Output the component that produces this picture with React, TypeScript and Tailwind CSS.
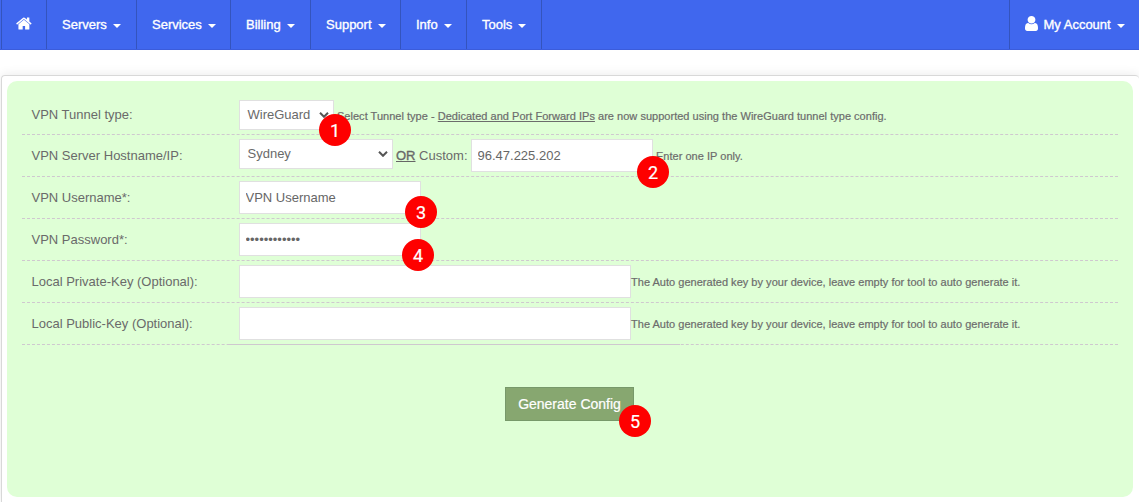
import type { ReactNode } from 'react';

const navItems = [
  { label: 'Servers', width: 'w-[90px]', text: 'w-[45px]' },
  { label: 'Services', width: 'w-[94px]', text: 'w-[50px]' },
  { label: 'Billing', width: 'w-[80px]', text: 'w-[35px]' },
  { label: 'Support', width: 'w-[90px]', text: 'w-[46px]' },
  { label: 'Info', width: 'w-[66px]', text: 'w-[22px]' },
  { label: 'Tools', width: 'w-[75px]', text: 'w-[30px]' },
];

function HomeIcon() {
  return (
    <svg viewBox="0 0 1792 1792" className="size-[17px] fill-current">
      <path d="M1408 992v480q0 26-19 45t-45 19h-384v-384h-256v384h-384q-26 0-45-19t-19-45v-480q0-1 .5-3t.5-3l575-474 575 474q1 2 1 6zm223-69l-62 74q-8 9-21 11h-3q-13 0-21-7l-692-577-692 577q-12 8-24 7-13-2-21-11l-62-74q-8-10-7-23.5t11-21.5l719-599q32-26 76-26t76 26l244 204v-195q0-14 9-23t23-9h192q14 0 23 9t9 23v408l219 182q10 8 11 21.5t-7 23.5z" />
    </svg>
  );
}

function UserIcon() {
  return (
    <svg viewBox="256 128 1280 1536" preserveAspectRatio="none" className="h-[15px] w-[13px] fill-current">
      <path d="M1536 1399q0 109-62.5 187t-150.5 78h-854q-88 0-150.5-78t-62.5-187q0-85 8.5-160.5t31.5-152 58.5-131 94-89 134.5-34.5q131 128 313 128t313-128q76 0 134.5 34.5t94 89 58.5 131 31.5 152 8.5 160.5zm-256-887q0 159-112.5 271.5t-271.5 112.5-271.5-112.5-112.5-271.5 112.5-271.5 271.5-112.5 271.5 112.5 112.5 271.5z" />
    </svg>
  );
}

function Caret() {
  return <span className="mt-[3px] border-x-4 border-t-4 border-x-transparent border-t-white" />;
}

function Badge({ n, place }: { n: number; place: string }) {
  return (
    <span className={`absolute z-10 flex size-8 items-center justify-center rounded-full bg-[#fe0000] text-[18px] text-white [-webkit-text-stroke:0.2px_white] font-['Roboto',sans-serif] ${place}`}>
      {n}
    </span>
  );
}

function Row({ label, first, last, children }: { label: string; first?: boolean; last?: boolean; children: ReactNode }) {
  return (
    <div className={`flex border-b border-dashed border-[#cfc8cf] ${first ? 'h-[39px]' : 'h-[42px]'}`}>
      <div className={`w-[217px] shrink-0 pl-[9.5px] leading-[18px] ${first ? 'pt-[10px]' : 'pt-[12px]'}`}>{label}</div>
      <div className="relative flex grow items-start pt-1">
        {children}
        {last && <span className="absolute -bottom-px -left-[11px] w-[452px] border-b border-[#cfc8cf]" />}
      </div>
    </div>
  );
}

function Select({ value, width }: { value: string; width: string }) {
  return (
    <div className={`flex h-[30px] shrink-0 items-center justify-between border border-[#e0e0e0] bg-white pr-1 pl-[7.5px] ${width}`}>
      {value}
      <svg viewBox="0 0 10 6" className="h-[6px] w-[10px] fill-none stroke-[#555] stroke-2">
        <path d="M1 .8 5 4.8 9 .8" />
      </svg>
    </div>
  );
}

function Field({ value, width, type = 'text' }: { value?: string; width: string; type?: string }) {
  return (
    <input
      type={type}
      defaultValue={value}
      className={`h-[33px] shrink-0 border border-[#e0e0e0] bg-white px-[5.5px] text-[#666] outline-none ${width}`}
    />
  );
}

const hint = 'whitespace-nowrap text-[11px] leading-[14px] tracking-[0.022px] text-[#6c6c6c] [-webkit-text-stroke:0.2px_#6c6c6c]';

export default function App() {
  return (
    <div className="flex h-[502px] w-[1139px] flex-col overflow-hidden bg-white font-['Liberation_Sans',Arial,sans-serif] text-[13px] text-[#6a6a6a]">
      <nav className="flex h-[50px] shrink-0 border-b border-[#3b5cdb] bg-[#4067ee] pl-px text-white [-webkit-text-stroke:0.35px_white]">
        <a className="flex w-[46px] items-center justify-center border-x border-[#3454bd] pb-0.5">
          <HomeIcon />
        </a>
        {navItems.map((item) => (
          <a key={item.label} className={`flex items-center border-r border-[#3454bd] pl-[15px] ${item.width}`}>
            <span className={`mr-[6px] whitespace-nowrap ${item.text}`}>{item.label}</span>
            <Caret />
          </a>
        ))}
        <a className="ml-auto flex w-[130px] items-center border-l border-[#3454bd] pl-[15px]">
          <span className="mr-[5.5px] pb-[2px]"><UserIcon /></span>
          <span className="mr-[5.5px] w-[68px] whitespace-nowrap">My Account</span>
          <Caret />
        </a>
      </nav>

      <main className="mt-[25px] ml-px grow rounded-t-[4px] border-t border-l border-[#d8d8d8] px-[5px] pt-[5px] shadow-[0_0_12px_rgba(0,0,0,0.09)]">
        <div className="h-[416px] w-[1126px] rounded-[10px] bg-[#dfffd6] pt-[15px] pr-[15px] pl-[15px]">
          <Row label="VPN Tunnel type:" first>
            <Select value="WireGuard" width="w-[95px]" />
            <p className={`mt-[9px] ml-[3px] ${hint}`}>
              Select Tunnel type - <span className="underline underline-offset-1">Dedicated and Port Forward IPs</span> are now supported using the WireGuard tunnel type config.
            </p>
            <Badge n={1} place="left-[80px] top-[18px]" />
          </Row>
          <Row label="VPN Server Hostname/IP:">
            <Select value="Sydney" width="w-[154px]" />
            <span className="mt-2 ml-[3px] w-[75px] shrink-0 whitespace-nowrap leading-[18px]">
              <span className="underline underline-offset-1 [-webkit-text-stroke:0.35px_#666]">OR</span> Custom:
            </span>
            <Field value="96.47.225.202" width="w-[182px]" />
            <p className={`mt-[10px] ml-[3px] ${hint}`}>Enter one IP only.</p>
            <Badge n={2} place="left-[398px] top-[21px]" />
          </Row>
          <Row label="VPN Username*:">
            <Field value="VPN Username" width="w-[182px]" />
            <Badge n={3} place="left-[166px] top-[19px]" />
          </Row>
          <Row label="VPN Password*:">
            <Field value="passwordpass" type="password" width="w-[182px]" />
            <Badge n={4} place="left-[163px] top-[20px]" />
          </Row>
          <Row label="Local Private-Key (Optional):">
            <Field width="w-[392px]" />
            <p className={`mt-[10px] ${hint}`}>The Auto generated key by your device, leave empty for tool to auto generate it.</p>
          </Row>
          <Row label="Local Public-Key (Optional):" last>
            <Field width="w-[392px]" />
            <p className={`mt-[10px] ${hint}`}>The Auto generated key by your device, leave empty for tool to auto generate it.</p>
          </Row>
          <div className="mt-[42px] flex pl-[483px]">
            <div className="relative">
              <button className="h-[34px] w-[129px] border border-[#77996a] bg-[#87a770] text-[14px] text-white [-webkit-text-stroke:0.2px_white]">
                Generate Config
              </button>
              <Badge n={5} place="left-[114px] top-[18px]" />
            </div>
          </div>
        </div>
      </main>
    </div>
  );
}
